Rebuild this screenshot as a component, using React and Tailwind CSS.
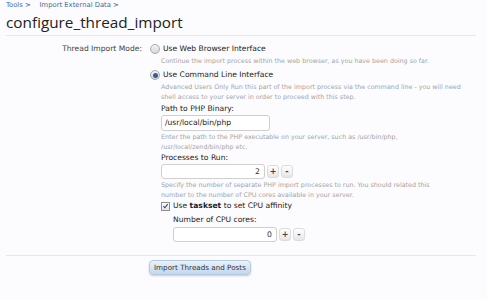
import React from 'react';

const body = { fontFamily: '"DejaVu Sans", Verdana, sans-serif' };

function Radio({ checked }) {
  return (
    <span className="flex h-[10px] w-[10px] shrink-0 items-center justify-center rounded-full border border-[#a8a8a8] bg-gradient-to-b from-[#f2f2f2] to-[#d8d8d8]">
      {checked && <span className="h-[5px] w-[5px] rounded-full bg-[#2f5f9e]" />}
    </span>
  );
}

function Spinner({ value }) {
  return (
    <div className="flex items-center gap-[2px]">
      <div className="flex h-[15px] w-[104px] items-center justify-end rounded-[3px] border border-[#cfcfcf] bg-white pr-[4px] text-[7.7px] text-[#333]">
        {value}
      </div>
      <button className="flex h-[13px] w-[12px] items-center justify-center rounded-[3px] border border-[#dcdcdc] bg-gradient-to-b from-white to-[#e6e6e6] text-[8px] font-bold text-[#444]">
        +
      </button>
      <button className="flex h-[13px] w-[12px] items-center justify-center rounded-[3px] border border-[#dcdcdc] bg-gradient-to-b from-white to-[#e6e6e6] text-[8px] font-bold text-[#444]">
        -
      </button>
    </div>
  );
}

function Hint({ children }) {
  return <p className="text-[6.35px] leading-[10px] text-[#a5a5a5]">{children}</p>;
}

export default function App() {
  return (
    <div className="h-[300px] w-[487px] bg-[#fcfcfe] px-[6px] pt-[1px]" style={body}>
      <div className="flex gap-[9px] text-[6.8px] leading-[9px] text-[#46689c]">
        <span>Tools &gt;</span>
        <span>Import External Data &gt;</span>
      </div>
      <h1
        className="mt-[1px] text-[15.3px] leading-[22px] text-[#222]"
        style={{ fontFamily: '"Open Sans", sans-serif' }}
      >
        configure_thread_import
      </h1>
      <div className="mt-[2px] w-[470px] border-t border-[#e4e6ea]" />

      <div className="mt-[7px] flex">
        <div className="w-[136px] pt-[1px] text-right text-[7.6px] leading-[10px] text-[#444]">
          Thread Import Mode:
        </div>
        <div className="ml-[8px] flex-1">
          <label className="flex items-center gap-[3px] text-[7.6px] leading-[12px] text-[#222]">
            <Radio />
            Use Web Browser Interface
          </label>
          <div className="ml-[11px] mt-[1px]">
            <Hint>Continue the import process within the web browser, as you have been doing so far.</Hint>
          </div>

          <label className="mt-[3px] flex items-center gap-[3px] text-[7.6px] leading-[12px] text-[#222]">
            <Radio checked />
            Use Command Line Interface
          </label>
          <div className="ml-[11px] mt-[1px]">
            <Hint>
              Advanced Users Only Run this part of the import process via the command line - you will need
              <br />
              shell access to your server in order to proceed with this step.
            </Hint>

            <div className="mt-[2px] text-[7.6px] leading-[10px] text-[#222]">Path to PHP Binary:</div>
            <div className="mt-[1px] flex h-[16px] w-[109px] items-center rounded-[3px] border border-[#cfcfcf] bg-white pl-[3px] text-[7.6px] text-[#222]">
              /usr/local/bin/php
            </div>
            <div className="mt-[1px]">
              <Hint>
                Enter the path to the PHP executable on your server, such as /usr/bin/php,
                <br />
                /usr/local/zend/bin/php etc.
              </Hint>
            </div>

            <div className="mt-[1px] text-[7.6px] leading-[10px] text-[#222]">Processes to Run:</div>
            <div className="mt-[1px]">
              <Spinner value="2" />
            </div>
            <div className="mt-[1px]">
              <Hint>
                Specify the number of separate PHP import processes to run. You should related this
                <br />
                number to the number of CPU cores available in your server.
              </Hint>
            </div>

            <label className="flex items-center gap-[3px] text-[7.6px] leading-[12px] text-[#222]">
              <span className="flex h-[9px] w-[9px] items-center justify-center border border-[#8f8f8f] bg-gradient-to-b from-white to-[#e2e2e2]">
                <svg viewBox="0 0 10 10" className="h-[8px] w-[8px]">
                  <path d="M2 5.2 L4.2 7.5 L8.2 2.2" fill="none" stroke="#2c4a78" strokeWidth="1.6" />
                </svg>
              </span>
              <span>
                Use <b>taskset</b> to set CPU affinity
              </span>
            </label>
            <div className="ml-[12px]">
              <div className="mt-[3px] text-[7.6px] leading-[10px] text-[#222]">Number of CPU cores:</div>
              <div className="mt-[2px]">
                <Spinner value="0" />
              </div>
            </div>
          </div>
        </div>
      </div>

      <div className="mt-[13px] w-[470px] border-t border-[#e4e6ea]" />
      <div className="mt-[4px] flex pl-[143px]">
        <button className="h-[15px] rounded-[4px] border border-[#b6cbe3] bg-gradient-to-b from-[#eaf2fb] to-[#c3d7ee] px-[4px] text-[7.2px] leading-[13px] text-[#333] shadow-[0_1px_2px_rgba(0,0,0,0.2)]">
          Import Threads and Posts
        </button>
      </div>
    </div>
  );
}
